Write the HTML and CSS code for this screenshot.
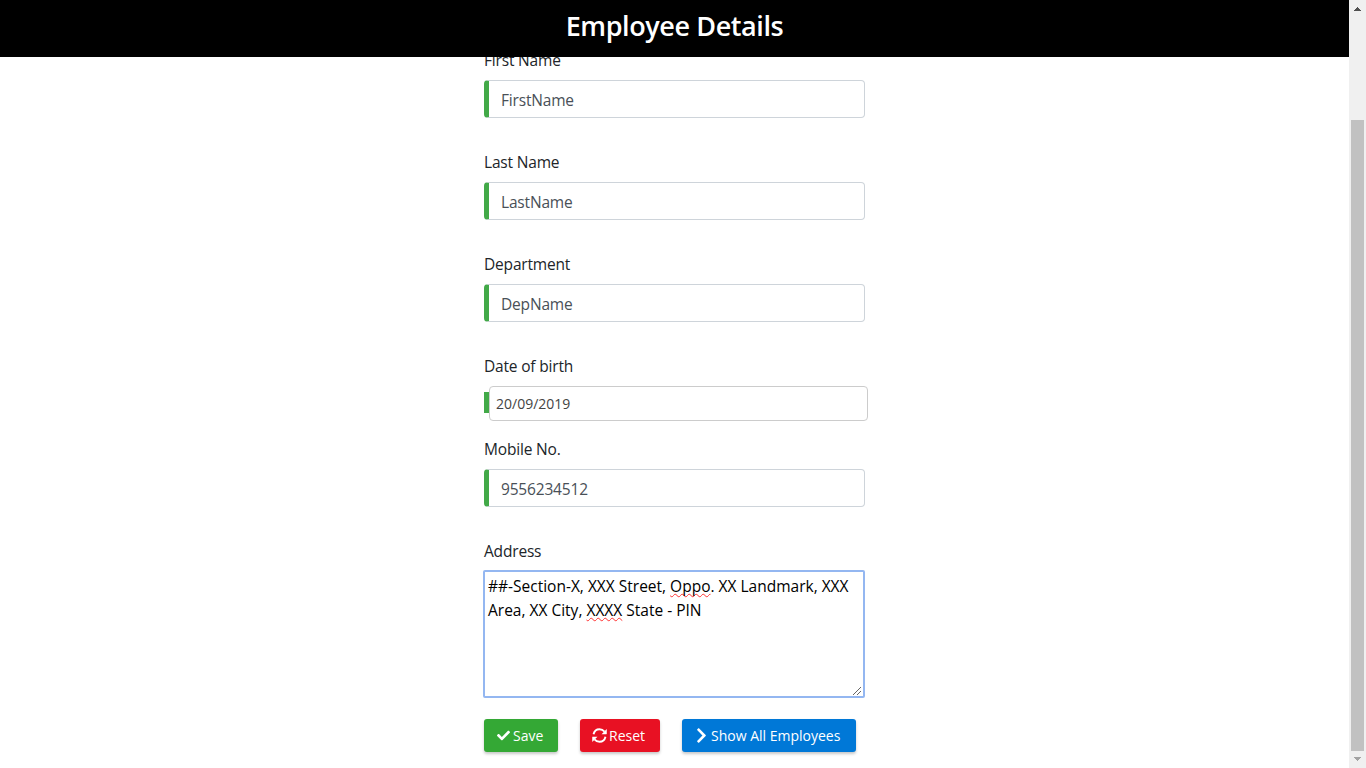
FILE: index.html
```html
<!DOCTYPE html>
<html lang="en">
<head>
<meta charset="utf-8">
<title>Employee Details</title>
<link rel="stylesheet" href="styles.css">
</head>
<body>
<div class="page">
  <header class="header"><h1 class="title">Employee Details</h1></header>
  <main class="form">
    <div class="field"><label class="label">First Name</label><div class="input">FirstName</div></div>
    <div class="field"><label class="label">Last Name</label><div class="input">LastName</div></div>
    <div class="field"><label class="label">Department</label><div class="input">DepName</div></div>
    <div class="field field-date"><label class="label">Date of birth</label><div class="date"><i class="date-mark"></i><div class="date-input">20/09/2019</div></div></div>
    <div class="field"><label class="label">Mobile No.</label><div class="input">9556234512</div></div>
    <div class="field field-address"><label class="label">Address</label>
      <div class="textarea">
        <div class="line">##-Section-X, XXX Street, <span class="spell">Oppo</span>. XX Landmark, XXX</div>
        <div class="line">Area, XX City, <span class="spell">XXXX</span> State - PIN</div>
        <svg class="grip" width="9" height="9" viewBox="0 0 9 9" shape-rendering="crispEdges"><path d="M0 8h1v1H0zM1 7h1v1H1zM2 6h1v1H2zM3 5h1v1H3zM4 4h1v1H4zM5 3h1v1H5zM6 2h1v1H6zM7 1h1v1H7zM4 8h1v1H4zM5 7h1v1H5zM6 6h1v1H6zM7 5h1v1H7z" fill="#666"/></svg>
      </div>
    </div>
    <div class="actions">
      <button class="btn save"><svg width="13" height="13" viewBox="0 0 512 512"><path fill="#fff" d="M173.898 439.404l-166.4-166.4c-9.997-9.997-9.997-26.206 0-36.204l36.203-36.204c9.997-9.998 26.207-9.998 36.204 0L192 312.69 432.095 72.596c9.997-9.997 26.207-9.997 36.204 0l36.203 36.204c9.997 9.997 9.997 26.206 0 36.204l-294.4 294.401c-9.998 9.997-26.207 9.997-36.204-.001z"/></svg><span>Save</span></button>
      <button class="btn reset"><svg width="15" height="15" viewBox="0 0 512 512"><path fill="none" stroke="#fff" stroke-width="64" d="M52 214C75 113 158 42 256 42c72 0 130 30 172 78M460 298C437 399 354 470 256 470c-72 0-130-30-172-78"/><path fill="#fff" d="M504 35v165c0 10-6 16-16 16H325zM8 477V312c0-10 6-16 16-16h163z"/></svg><span>Reset</span></button>
      <button class="btn show"><svg width="11" height="17" viewBox="0 0 320 512"><path fill="#fff" d="M285.476 272.971L91.132 467.314c-9.373 9.373-24.569 9.373-33.941 0l-22.667-22.667c-9.357-9.357-9.375-24.522-.04-33.901L188.505 256 34.484 101.255c-9.335-9.379-9.317-24.544.04-33.901l22.667-22.667c9.373-9.373 24.569-9.373 33.941 0L285.475 239.03c9.373 9.372 9.373 24.568.001 33.941z"/></svg><span>Show All Employees</span></button>
    </div>
  </main>
</div>
<aside class="scrollbar">
  <svg class="arrow" width="7" height="4" viewBox="0 0 7 4" shape-rendering="crispEdges"><path fill="#505050" d="M3 0h1v1H3zM2 1h3v1H2zM1 2h5v1H1zM0 3h7v1H0z"/></svg>
  <div class="thumb"></div>
  <svg class="arrow" width="7" height="4" viewBox="0 0 7 4" shape-rendering="crispEdges"><path fill="#a3a3a3" d="M0 0h7v1H0zM1 1h5v1H1zM2 2h3v1H2zM3 3h1v1H3z"/></svg>
</aside>
</body>
</html>
```
FILE: styles.css
```css
* { box-sizing: border-box; }
body {
  margin: 0;
  display: flex;
  width: 1366px;
  height: 768px;
  overflow: hidden;
  background: #fff;
  color: #212529;
  font: 400 15.5px/24px "Open Sans", "Noto Sans", sans-serif;
  letter-spacing: -.18px;
}
.page { flex: 1; }
.header {
  position: fixed;
  top: 0;
  left: 0;
  width: 1349px;
  height: 57px;
  background: #000;
  color: #fff;
  text-align: center;
}
.title { margin: 0; padding-top: 9px; font-size: 27px; line-height: 34px; font-weight: 600; letter-spacing: -.4px; white-space: nowrap; }
.form { width: 384px; margin: 48px 0 0 484px; }
.field { width: 381px; margin-bottom: 32px; }
.label { display: block; margin-bottom: 8px; white-space: nowrap; }
.input {
  height: 38px;
  padding: 7px 12px 5px;
  border: 1px solid #ced4da;
  border-left: 5px solid #42a948;
  border-radius: 4px;
  color: #495057;
}
.field-date { margin-bottom: 16px; }
.date { display: flex; align-items: center; width: 384px; height: 35px; }
.date-mark { width: 5px; height: 21px; margin-bottom: 3px; background: #42a948; }
.date-input {
  width: 379px;
  height: 35px;
  padding: 5px 6px;
  border: 1px solid #ccc;
  border-radius: 4px;
  color: #444;
  font-size: 14px;
  letter-spacing: 0;
}
.field-address { margin-bottom: 21px; }
.textarea {
  position: relative;
  width: 382px;
  height: 128px;
  margin: -1px 0 0 -1px;
  padding: 2px 2px 2px 3px;
  border: 2px solid #94b7f1;
  border-radius: 2px;
  color: #000;
  letter-spacing: 0;
}
.line { white-space: nowrap; }
.spell {
  text-decoration: underline wavy #f33 1px;
  text-decoration-skip-ink: none;
  text-underline-offset: 1px;
}
.grip { position: absolute; right: 1px; bottom: 1px; }
.actions { display: flex; gap: 22px; height: 33px; }
.btn {
  display: flex;
  align-items: center;
  height: 33px;
  padding: 0 0 0 12px;
  border: 0;
  border-radius: 3px;
  color: #fff;
  font: 400 14px/20px "Open Sans", "Noto Sans", sans-serif;
  white-space: nowrap;
  box-shadow: 0 2px 3px rgba(0, 0, 0, .22);
}
.save { width: 74px; padding-left: 13px; gap: 3px; background: #34a835; }
.reset { width: 80px; gap: 2px; background: #e81123; }
.show { width: 174px; padding-left: 14px; gap: 4px; background: #0078d7; }
.scrollbar {
  display: flex;
  flex-direction: column;
  align-items: center;
  width: 17px;
  padding: 7px 0 6px;
  background: #f0f0f0;
}
.thumb { width: 13px; height: 631px; margin: 109px 0 6px; background: #c1c1c1; }
```
